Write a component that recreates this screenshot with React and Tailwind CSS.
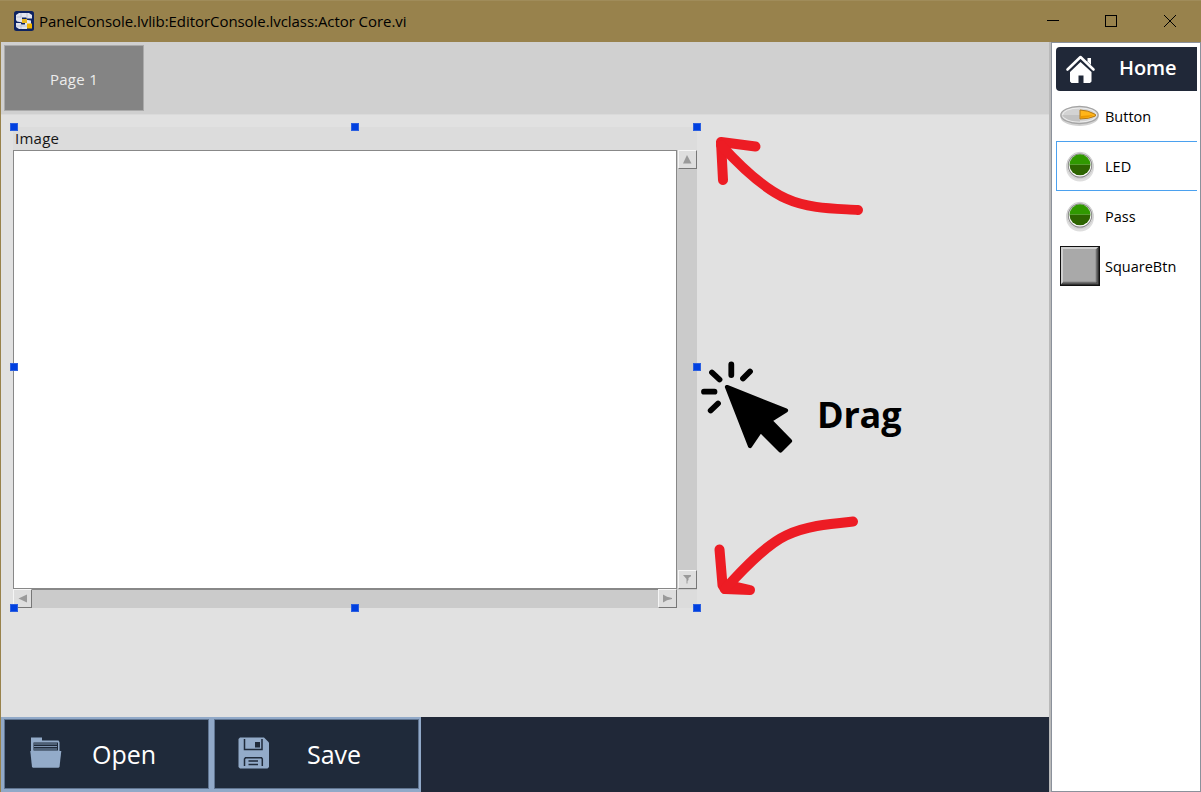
import React from "react";

const HANDLES = [
  [10, 123], [351, 123], [693, 123],
  [10, 363], [693, 363],
  [10, 604], [351, 604], [693, 604],
];

function AppIcon() {
  return (
    <svg width="20" height="20" viewBox="0 0 20 20" className="shrink-0">
      <rect width="20" height="20" rx="2.5" fill="#0d2260" />
      <path d="M5 2h10l3 2v3.500h-5.500V6.500H8v1.500l9 1.500v4H13V18H5l-3-2v-4h5v1.500h4V12L3 10.500 2 9V4z" fill="#e4e6ee" />
      <path d="M7 2v4.500M13 2v5M2.500 6h5M7 13v5M2 15h11" stroke="#b4bbd0" strokeWidth="0.800" />
      <rect x="8" y="8" width="5" height="4" fill="#e9b51d" />
      <rect x="13" y="12.500" width="5" height="5" fill="#f0b400" />
    </svg>
  );
}

function TitleBar() {
  return (
    <header className="flex h-[42px] shrink-0 items-center border-t border-[#a08c5a] bg-[#98824c] pb-[2px] pl-[14px]">
      <AppIcon />
      <h1 className="ml-[5px] flex-1 whitespace-nowrap text-[15px] leading-5 tracking-[-0.06px] text-black">
        PanelConsole.lvlib:EditorConsole.lvclass:Actor Core.vi
      </h1>
      <svg width="154" height="39" viewBox="1047 1 154 39" fill="none" stroke="#000" strokeWidth="1" shapeRendering="crispEdges">
        <path d="M1047 20.500h12" />
        <rect x="1105.500" y="15.500" width="11" height="11" />
        <path d="M1164 15l12 12M1176 15l-12 12" shapeRendering="auto" />
      </svg>
    </header>
  );
}

function ScrollButton({ d }) {
  return (
    <div className="flex h-[19px] w-[19px] shrink-0 items-center justify-center border border-b-[#777] border-l-[#f5f5f5] border-r-[#777] border-t-[#f5f5f5] bg-[#dedede]">
      <svg width="11" height="11" viewBox="0 0 11 11">
        <path d={d} fill="#9a9a9a" />
      </svg>
    </div>
  );
}

function ImageControl() {
  return (
    <section className="absolute left-[12px] top-[12px] flex h-[481px] w-[684px] flex-col bg-[#dcdcdc]">
      <div className="h-[23px] pl-[2px] text-[15px] leading-[22px] tracking-[0.25px] text-[#151515]">Image</div>
      <div className="flex h-[440px]">
        <div className="w-[664px] border border-b-2 border-[#888] bg-white" />
        <div className="flex w-[20px] flex-col items-center justify-between bg-[#cbcbcb] pb-px">
          <ScrollButton d="M5 1L9.500 9.500H1z" />
          <ScrollButton d="M1 1h8v1.200L6.500 4v2L5.500 7v2.500H4.500V5z" />
        </div>
      </div>
      <div className="flex h-[18px] w-[664px] items-end justify-between bg-[#cbcbcb]">
        <ScrollButton d="M1.500 5.500L10 1.500v8z" />
        <ScrollButton d="M1 1.500l4 2.200 5 1.300v1L5 7.200 1 9.500z" />
      </div>
    </section>
  );
}

function Annotations() {
  return (
    <svg className="absolute left-[699px] top-[15px]" width="172" height="470" viewBox="700 130 172 470">
      <g fill="none" stroke="#ed1c24" strokeWidth="10" strokeLinecap="round" strokeLinejoin="round">
        <path d="M755.500 146.500L721 142L723 180" />
        <path d="M721 145C740 166 763 188 786 198.500S835 208.500 858 210" />
        <path d="M719.500 549.500L722.500 585L725 589L750 590L726 584.500" />
        <path d="M725 589C744 568 766 545 786 535.500S828 524 853 521.500" />
      </g>
      <g stroke="#000" strokeWidth="5.800" strokeLinecap="round">
        <path d="M731.300 364.500v10.500M750 371.500l-7 7M712 372.500l7.500 7M704 391.700h10.500M718 403.500l-7.300 7" />
      </g>
      <path
        d="M727 387L786 410.500L770 420.500L790 441L780.500 450.500L760.500 430.500L750 446z"
        stroke="#000" strokeWidth="4.200" strokeLinejoin="round"
      />
    </svg>
  );
}

function Canvas() {
  return (
    <div className="relative h-[603px] border-t border-[#dadada] bg-[#e1e1e1]">
      <ImageControl />
      {HANDLES.map(([x, y]) => (
        <div
          key={`${x}-${y}`}
          className="absolute h-[8px] w-[8px] border border-[#2b5fe0] bg-[#0040e0]"
          style={{ left: x - 1, top: y - 115 }}
        />
      ))}
      <Annotations />
      <div className="absolute left-[816px] top-[276px] text-[36px] font-bold leading-[48px] tracking-[-0.2px] text-black">Drag</div>
    </div>
  );
}

function FolderIcon() {
  return (
    <svg width="32" height="32" viewBox="0 0 32 32" className="shrink-0">
      <path d="M1 14V0.500h11V3.500h16.500l1 1.500V14z" fill="#93abc9" />
      <path d="M3.500 5.500h24.500v8H3.500z" fill="#1f2a3a" />
      <path d="M4 7h23M4 9.500h23M4 12h23" stroke="#7d93b0" strokeWidth="1.100" />
      <path d="M0.300 14h31L29.500 30l-1 .8H3l-1-.8z" fill="#93abc9" />
    </svg>
  );
}

function FloppyIcon() {
  return (
    <svg width="32" height="32" viewBox="0 0 32 32" className="shrink-0">
      <path d="M2 0.500h24L31 5.500V30l-1.500 1.500H2L0.500 30V2z" fill="#93abc9" />
      <path d="M6.500 2v10.500h17.500V2M6.500 29v-7l1-1.300h16l.8 1.300v7M10.500 24h9.500M10.500 27.500h9.500" fill="none" stroke="#1f2a3a" strokeWidth="1.500" />
      <rect x="17" y="5" width="5" height="5.500" fill="#1f2a3a" />
    </svg>
  );
}

function FooterButton({ icon, iconPad, labelClass, label }) {
  return (
    <button className="flex h-[70px] w-[205px] items-center border border-[#5f7490] bg-[#1f2a3a] pb-[3px] text-left">
      <span className={iconPad}>{icon}</span>
      <span className={labelClass}>{label}</span>
    </button>
  );
}

function Footer() {
  return (
    <footer className="flex h-[75px] bg-[#202838]">
      <div className="flex w-[420px] gap-[5px] bg-[#91a9c8] pl-[3px] pt-[2px]">
        <FooterButton
          icon={<FolderIcon />}
          iconPad="pl-[25px]"
          label="Open"
          labelClass="pl-[30px] pt-[3px] text-[25px] leading-8 text-white"
        />
        <FooterButton
          icon={<FloppyIcon />}
          iconPad="pl-[23px]"
          label="Save"
          labelClass="pl-[37px] pt-[3px] text-[25px] leading-8 text-white"
        />
      </div>
    </footer>
  );
}

function HomeIcon() {
  return (
    <svg width="32" height="30" viewBox="0 0 32 30" className="shrink-0">
      <path d="M2.500 15.500L15.500 3L28.500 15.500" fill="none" stroke="#fff" strokeWidth="2.600" strokeLinecap="round" strokeLinejoin="round" />
      <path d="M22.500 4h3.500v7l-3.500-3.500z" fill="#fff" />
      <path d="M5 18L15.500 8L26.500 18V27.500l-1.500 1.500H18.500V21.500h-5V29H6.500L5 27.500z" fill="#fff" />
    </svg>
  );
}

function ButtonIcon() {
  return (
    <svg width="40" height="22" viewBox="0 0 40 22">
      <ellipse cx="19.500" cy="12" rx="19" ry="9" fill="#d2d2d2" />
      <ellipse cx="19.500" cy="10" rx="18.700" ry="8.500" fill="#cfcfcf" stroke="#a4a4a4" strokeWidth="1.300" />
      <ellipse cx="19.500" cy="10" rx="17" ry="7" fill="#d3d3d3" stroke="#efefef" />
      <path d="M2.500 11Q9 17 20 16.500V10H2.500z" fill="#c2c2c2" />
      <path d="M20 5q8 0 15.500 4.500v1.500Q29 14 20 14z" fill="#ffb51a" stroke="#b57917" />
      <path d="M21 11l12-1q-5 3-12 3z" fill="#ec9900" />
    </svg>
  );
}

function LedIcon() {
  return (
    <svg width="32" height="32" viewBox="0 0 32 32">
      <circle cx="16" cy="17.500" r="14" fill="#dedede" />
      <circle cx="16" cy="15.500" r="13.200" fill="#f6f6f6" stroke="#cccccc" />
      <circle cx="16" cy="15.500" r="11.700" fill="#fff" stroke="#8f8f8f" strokeWidth="1.200" />
      <path d="M5.500 14.800a10.500 10.500 0 0 1 21 0z" fill="#309900" />
      <path d="M5.500 14.800a10.500 10.500 0 0 0 21 0z" fill="#2d6500" />
    </svg>
  );
}

function SquareIcon() {
  return (
    <svg width="40" height="40" viewBox="0 0 40 40">
      <rect width="40" height="40" fill="#111" />
      <path d="M1 1h37.500L1 38.500z" fill="#d0d0d0" />
      <path d="M38.500 1v37.500H1z" fill="#555" />
      <rect x="3" y="3" width="33" height="33" fill="#a9a9a9" />
      <path d="M3 36h33V3" fill="none" stroke="#898989" />
    </svg>
  );
}

function PaletteItem({ icon, label, selected }) {
  return (
    <li
      className={
        selected
          ? "flex h-[50px] items-center border-y border-l border-[#4ba1ef] pl-[2px]"
          : "flex h-[50px] items-center pl-[3px]"
      }
    >
      <span className="flex w-[41px] justify-center">{icon}</span>
      <span className="pl-[5px] pt-[2px]">{label}</span>
    </li>
  );
}

function Palette() {
  return (
    <aside className="flex w-[150px] flex-col border border-[#8b919b] bg-white pl-[4px] pr-[3px] pt-[4px]">
      <div className="flex h-[44px] shrink-0 items-center rounded-l-[4px] bg-[#202838] pl-[9px]">
        <HomeIcon />
        <span className="ml-[22px] pb-[2px] text-[20px] font-semibold leading-7 tracking-[-0.1px] text-white">Home</span>
      </div>
      <ul className="text-[14.5px] leading-5 text-black">
        <PaletteItem icon={<ButtonIcon />} label="Button" />
        <PaletteItem icon={<LedIcon />} label="LED" selected />
        <PaletteItem icon={<LedIcon />} label="Pass" />
        <PaletteItem icon={<SquareIcon />} label="SquareBtn" />
      </ul>
    </aside>
  );
}

export default function App() {
  return (
    <div className="flex h-[792px] w-[1201px] flex-col overflow-hidden bg-[#e1e1e1] font-['Open_Sans','Noto_Sans',sans-serif]">
      <TitleBar />
      <div className="flex h-[750px]">
        <main className="flex w-[1049px] flex-col border-l border-[#98824c]">
          <div className="h-[72px] bg-[#d0d0d0] pl-[3px] pt-[3px]">
            <div className="flex h-[66px] w-[140px] items-center justify-center border border-[#aaa] bg-[#848484] pt-[2px] text-[15px] tracking-[0.3px] text-[#ececec]">
              Page 1
            </div>
          </div>
          <Canvas />
          <Footer />
        </main>
        <div className="w-[2px] bg-[#b9b9b9]" />
        <Palette />
      </div>
    </div>
  );
}
